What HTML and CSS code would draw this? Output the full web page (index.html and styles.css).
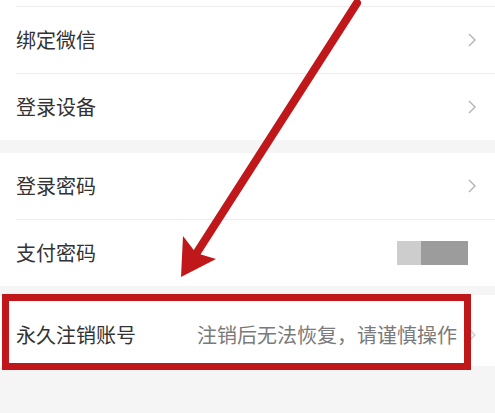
FILE: index.html
```html
<!DOCTYPE html>
<html lang="zh-CN">
<head>
    <meta charset="UTF-8">
    <meta name="viewport" content="width=device-width, initial-scale=1.0">
    <title>账号与安全</title>
    <link rel="stylesheet" href="styles.css">
</head>
<body>
    <div class="page">
        <div class="group">
            <div class="stub"></div>
            <div class="cell">
                <span class="label">绑定微信</span>
                <svg class="arrow-right" viewBox="0 0 8 14"><path d="M1 1 L7 7 L1 13"/></svg>
            </div>
            <div class="cell">
                <span class="label">登录设备</span>
                <svg class="arrow-right" viewBox="0 0 8 14"><path d="M1 1 L7 7 L1 13"/></svg>
            </div>
        </div>

        <div class="group group-2">
            <div class="cell first">
                <span class="label">登录密码</span>
                <svg class="arrow-right" viewBox="0 0 8 14"><path d="M1 1 L7 7 L1 13"/></svg>
            </div>
            <div class="cell">
                <span class="label">支付密码</span>
                <div class="blurred">
                    <div class="blur-light"></div>
                    <div class="blur-dark"></div>
                </div>
            </div>
        </div>

        <div class="group group-3">
            <div class="cell first cancel">
                <span class="label">永久注销账号</span>
                <span class="hint">注销后无法恢复，请谨慎操作</span>
                <svg class="arrow-right faint" viewBox="0 0 8 14"><path d="M1 1 L7 7 L1 13"/></svg>
            </div>
        </div>

        <!-- annotation drawn on top of the screenshot -->
        <svg class="markup" viewBox="0 0 495 413">
            <rect x="5.5" y="297.5" width="462" height="69" fill="none" stroke="#c0181a" stroke-width="7"/>
            <line x1="357" y1="3" x2="196" y2="254" stroke="#c0181a" stroke-width="8" stroke-linecap="round"/>
            <polygon points="181,277 183,236 196,253 216,259" fill="#c0181a"/>
        </svg>
    </div>
</body>
</html>
```

FILE: styles.css
```css
body {
    margin: 0;
    padding: 0;
    background: #f5f5f5;
    font-family: "Noto Sans CJK SC", "Noto Sans", sans-serif;
}
.page {
    position: relative;
    width: 495px;
    height: 413px;
    overflow: hidden;
}
.group {
    background: #fff;
}
.group-2 {
    margin-top: 13px;
}
.group-3 {
    margin-top: 9px;
}
.stub {
    height: 6px;
}
.cell {
    box-sizing: border-box;
    height: 67px;
    margin-left: 16px;
    padding-right: 19px;
    border-top: 1px solid #ededed;
    display: flex;
    align-items: center;
}
.cell.first {
    border-top: none;
    height: 66px;
}
.cell.cancel {
    height: 71px;
    padding-top: 8px;
}
.label {
    flex: 1;
    font-size: 20px;
    color: #333;
    line-height: 1;
}
.hint {
    font-size: 20px;
    color: #7a7a7a;
    line-height: 1;
    margin-right: 11px;
}
.arrow-right {
    width: 8px;
    height: 14px;
    fill: none;
    stroke: #b3b3b3;
    stroke-width: 1.4;
}
.arrow-right.faint {
    stroke: #cfcfcf;
}
.blurred {
    display: flex;
    height: 24px;
    margin-right: 8px;
}
.blur-light {
    width: 24px;
    background: #cdcdcd;
}
.blur-dark {
    width: 47px;
    background: #9c9c9c;
}
.markup {
    position: absolute;
    top: 0;
    left: 0;
    width: 495px;
    height: 413px;
    pointer-events: none;
}
```
